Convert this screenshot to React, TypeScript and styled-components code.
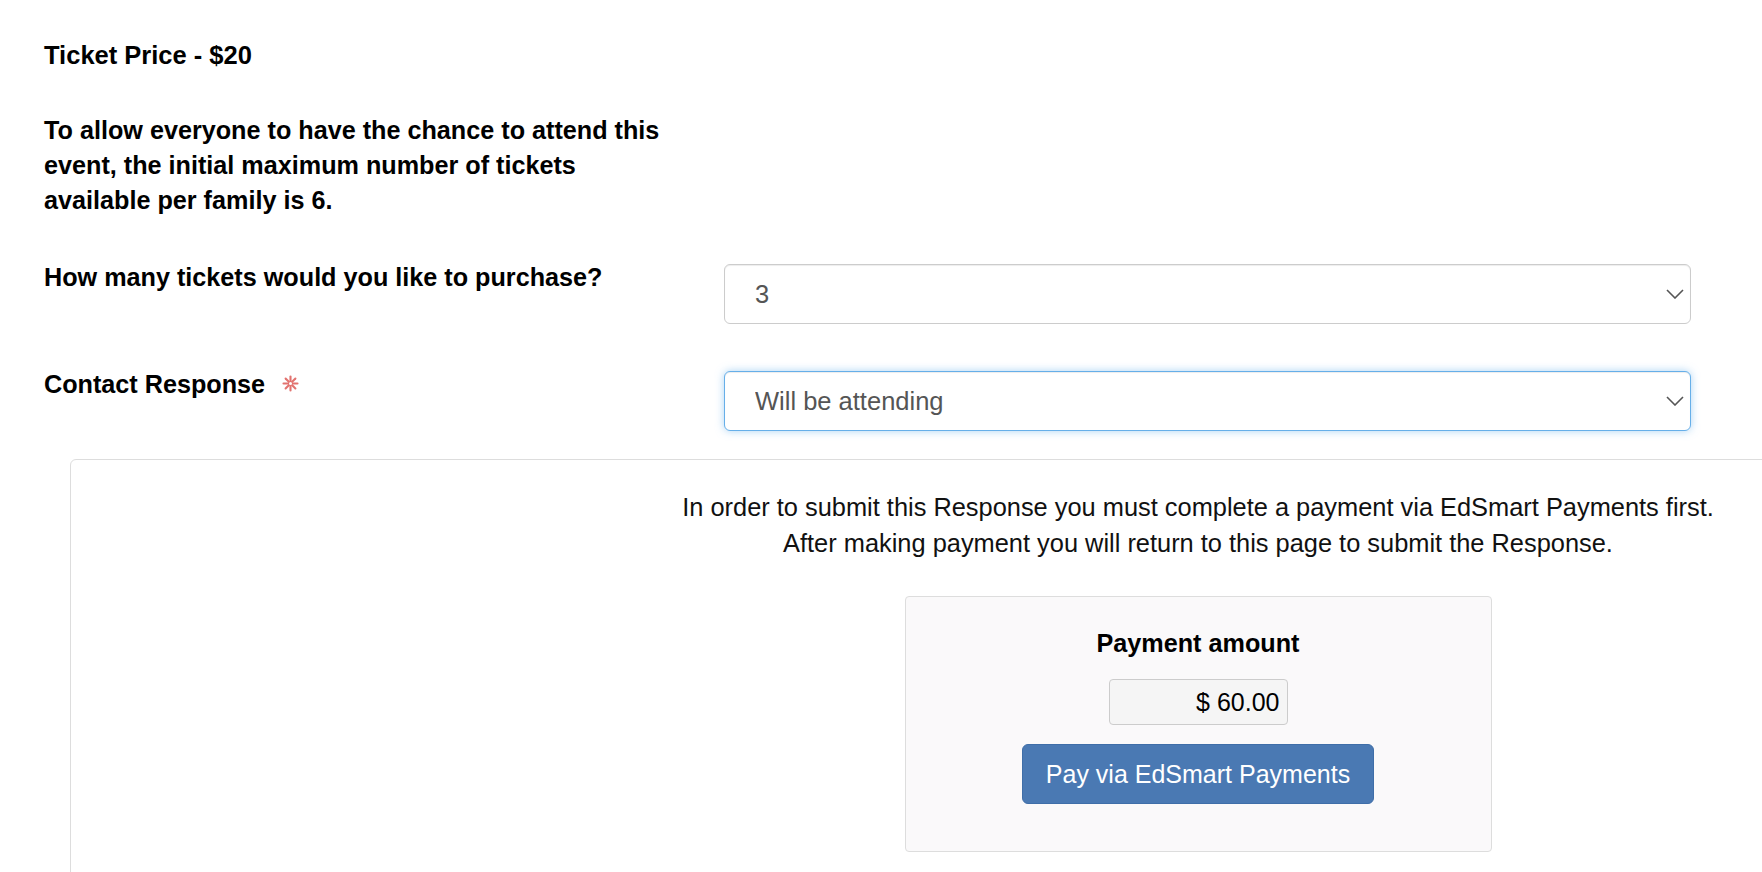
import { FC } from "react";
import styled, { createGlobalStyle } from "styled-components";

const GlobalStyle = createGlobalStyle`
  html, body {
    margin: 0;
    padding: 0;
    background: #fff;
    overflow: hidden;
  }
  body {
    font-family: "Liberation Sans", Arial, Helvetica, sans-serif;
    color: #000;
  }
`;

const Page = styled.div`
  padding-top: 38px;
  width: 1762px;
`;

const Intro = styled.div`
  padding-left: 44px;
  width: 632px;
`;

const Heading = styled.div`
  font-size: 25.5px;
  font-weight: 700;
  line-height: 35px;
  margin-bottom: 40px;
`;

const Notice = styled.div`
  font-size: 25.2px;
  font-weight: 700;
  line-height: 35px;
`;

const FormRow = styled.div<{ $gap: number }>`
  display: grid;
  grid-template-columns: 680px 967px;
  align-items: start;
  padding-left: 44px;
  margin-top: ${(p) => p.$gap}px;
`;

const Label = styled.label`
  display: flex;
  align-items: center;
  gap: 17px;
  font-size: 25.2px;
  font-weight: 700;
  line-height: 35px;
`;

const Required = styled.span`
  display: inline-flex;
  margin-top: -3px;
`;

const SelectWrap = styled.div`
  position: relative;
  margin-top: 3.5px;
`;

const Select = styled.select<{ $focused?: boolean }>`
  appearance: none;
  -webkit-appearance: none;
  box-sizing: border-box;
  width: 100%;
  height: 60px;
  padding: 0 40px 0 30px;
  font-family: "Liberation Sans", Arial, Helvetica, sans-serif;
  font-size: 25.5px;
  color: #555;
  background: #fff;
  border: 1px solid ${(p) => (p.$focused ? "#66afe9" : "#ccc")};
  border-radius: 6px;
  outline: none;
  box-shadow: ${(p) =>
    p.$focused
      ? "inset 0 1px 1px rgba(0,0,0,.075), 0 0 8px rgba(102,175,233,.55)"
      : "inset 0 1px 1px rgba(0,0,0,.075)"};
`;

const Chevron = styled.svg`
  position: absolute;
  right: 7px;
  top: 50%;
  margin-top: -5px;
  pointer-events: none;
`;

const Panel = styled.div`
  box-sizing: border-box;
  margin: 28px 0 0 70px;
  width: 2256px;
  padding: 29px 0 60px;
  border: 1px solid #ddd;
  border-radius: 6px;
  text-align: center;
`;

const PanelText = styled.p`
  margin: 0;
  font-size: 25.4px;
  line-height: 36px;
  color: #111;
`;

const PaymentBox = styled.div`
  box-sizing: border-box;
  width: 587px;
  margin: 35px auto 0;
  padding: 29px 0 47px;
  background: #faf9fa;
  border: 1px solid #ddd;
  border-radius: 4px;
  display: flex;
  flex-direction: column;
  align-items: center;
`;

const AmountLabel = styled.div`
  font-size: 25.2px;
  font-weight: 700;
  line-height: 35px;
`;

const AmountField = styled.input`
  box-sizing: border-box;
  width: 179px;
  height: 46px;
  margin-top: 18.5px;
  padding: 0 7px;
  text-align: right;
  font-family: "Liberation Sans", Arial, Helvetica, sans-serif;
  font-size: 25px;
  color: #000;
  background: #f5f5f5;
  border: 1px solid #ccc;
  border-radius: 4px;
  -webkit-text-fill-color: #000;
  opacity: 1;
`;

const PayButton = styled.button`
  margin-top: 19px;
  height: 60px;
  padding: 0 23px;
  font-family: "Liberation Sans", Arial, Helvetica, sans-serif;
  font-size: 25px;
  color: #fff;
  background: #4a79b3;
  border: 1px solid #3f6ea8;
  border-radius: 6px;
  cursor: pointer;
`;

const Asterisk: FC = () => (
  <svg width="17" height="17" viewBox="0 0 17 17">
    <g stroke="#de5b57" strokeWidth="2.1" strokeLinecap="round" opacity="0.85">
      <line x1="8.5" y1="1.5" x2="8.5" y2="15.5" />
      <line x1="1.5" y1="8.5" x2="15.5" y2="8.5" />
      <line x1="3.6" y1="3.6" x2="13.4" y2="13.4" />
      <line x1="13.4" y1="3.6" x2="3.6" y2="13.4" />
    </g>
    <circle cx="8.5" cy="8.5" r="1.5" fill="#fff" />
  </svg>
);

const Dropdown: FC<{ value: string; options: string[]; focused?: boolean }> = ({
  value,
  options,
  focused,
}) => (
  <SelectWrap>
    <Select $focused={focused} defaultValue={value}>
      {options.map((o) => (
        <option key={o} value={o}>
          {o}
        </option>
      ))}
    </Select>
    <Chevron width="18" height="10" viewBox="0 0 18 10">
      <polyline
        points="1,1 9,9 17,1"
        fill="none"
        stroke="#555"
        strokeWidth="1.6"
      />
    </Chevron>
  </SelectWrap>
);

export default function App() {
  return (
    <>
      <GlobalStyle />
      <Page>
        <Intro>
          <Heading>Ticket Price - $20</Heading>
          <Notice>
            To allow everyone to have the chance to attend this event, the
            initial maximum number of tickets available per family is 6.
          </Notice>
        </Intro>

        <FormRow $gap={42}>
          <Label>How many tickets would you like to purchase?</Label>
          <Dropdown value="3" options={["1", "2", "3", "4", "5", "6"]} />
        </FormRow>

        <FormRow $gap={43.5}>
          <Label>
            Contact Response
            <Required>
              <Asterisk />
            </Required>
          </Label>
          <Dropdown
            value="Will be attending"
            options={["Will be attending", "Will not be attending"]}
            focused
          />
        </FormRow>

        <Panel>
          <PanelText>
            In order to submit this Response you must complete a payment via
            EdSmart Payments first.
          </PanelText>
          <PanelText>
            After making payment you will return to this page to submit the
            Response.
          </PanelText>
          <PaymentBox>
            <AmountLabel>Payment amount</AmountLabel>
            <AmountField value="$ 60.00" readOnly disabled />
            <PayButton>Pay via EdSmart Payments</PayButton>
          </PaymentBox>
        </Panel>
      </Page>
    </>
  );
}
